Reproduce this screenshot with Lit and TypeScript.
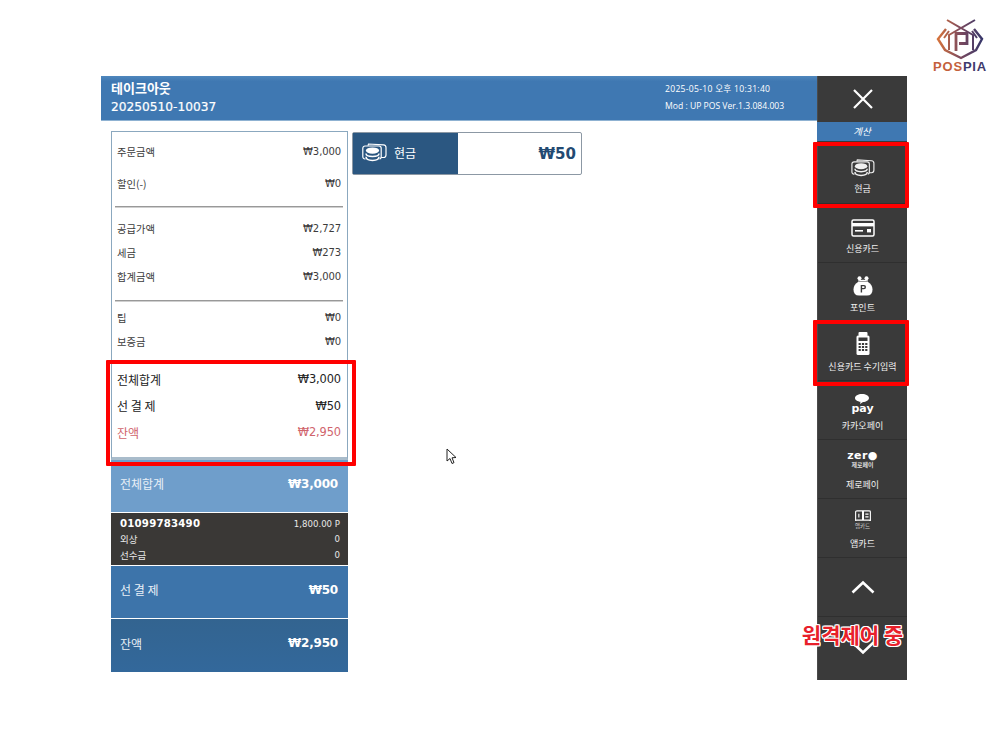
import { LitElement, html, css, svg } from "lit";
import { customElement } from "lit/decorators.js";

const cashIcon = (size: number, bg: string) => html`<svg width=${size} height=${Math.round(size * 0.76)} viewBox="0 0 25 19" fill="none" stroke="currentColor" stroke-width="1.2">
  <path d="M6 2.6 L6.5 1 L21.5 1.8 Q24 2 24 4.5 L24 12 Q24 14.5 21.5 14.5 L19 14.5"/>
  <rect x="0.8" y="3" width="18.4" height="13" rx="2.2"/>
  <path d="M3.5 6.5 H17.5 V19 H3.5 Z" fill=${bg} stroke="none"/>
  <ellipse cx="10.5" cy="7.6" rx="6.6" ry="3.2" fill="currentColor" stroke="none"/>
  <path d="M4 10.4 Q4 13.4 10.5 13.4 Q17 13.4 17 10.4" stroke-width="1.5"/>
  <path d="M4 13.8 Q4 17.4 10.5 17.4 Q17 17.4 17 13.8" stroke-width="1.5"/>
</svg>`;

const cardIcon = html`<svg width="24" height="18" viewBox="0 0 24 18" fill="none">
  <rect x="1" y="1" width="22" height="16" rx="1.5" stroke="#fff" stroke-width="1.5"/>
  <rect x="1" y="4" width="22" height="3.4" fill="#fff"/>
  <rect x="4" y="11" width="8" height="1.6" fill="#fff"/>
  <rect x="16" y="10" width="4" height="3.4" fill="#fff"/>
</svg>`;

const purseIcon = html`<svg width="20" height="20" viewBox="0 0 20 20">
  <circle cx="6.5" cy="2.2" r="2" fill="#fff"/><circle cx="13.5" cy="2.2" r="2" fill="#fff"/>
  <path d="M5 4.4 Q10 3 15 4.4 L15 5.4 L5 5.4 Z" fill="#fff"/>
  <path d="M5 6 L15 6 Q19.5 8.5 19.5 13.5 Q19.5 19.5 14 19.5 L6 19.5 Q0.5 19.5 0.5 13.5 Q0.5 8.5 5 6 Z" fill="#fff"/>
  <path d="M7.7 16.5 L7.7 9 L11 9 Q13 9 13 11 Q13 13.2 11 13.2 L9.1 13.2 L9.1 16.5 Z M9.1 10.2 L9.1 12 L10.8 12 Q11.6 12 11.6 11.1 Q11.6 10.2 10.8 10.2 Z" fill="#3a3a3a" fill-rule="evenodd"/>
</svg>`;

const terminalIcon = html`<svg width="14" height="23" viewBox="0 0 14 23">
  <rect x="2.5" y="0" width="9" height="4" rx="1" fill="#fff"/>
  <rect x="0.5" y="3.5" width="13" height="19.5" rx="1.5" fill="#fff"/>
  <rect x="2.5" y="5.5" width="9" height="3.5" fill="#3a3a3a"/>
  ${[11, 14, 17].map((y) => [2.6, 5.9, 9.2].map((x) => svg`<rect x=${x} y=${y} width="2.2" height="2" fill="#3a3a3a"/>`))}
</svg>`;

const appIcon = html`<svg width="18" height="12" viewBox="0 0 18 13" fill="none" stroke="#fff" stroke-width="1.2">
  <path d="M1 2 Q1 1 2.5 1 L8.5 1 L8.5 11 L2.5 11 Q1 11 1 12 Z"/>
  <path d="M9.5 1 L15.5 1 Q17 1 17 2 L17 12 Q17 11 15.5 11 L9.5 11 Z"/>
  <path d="M4.5 4 L4.5 8 M11.5 4.5 L15 4.5 M11.5 7.5 L15 7.5"/>
</svg>`;

const logo = html`<svg width="50" height="42" viewBox="0 0 50 42" fill="none">
  <defs><linearGradient id="lg" gradientUnits="userSpaceOnUse" x1="2" y1="20" x2="48" y2="20">
    <stop offset="0" stop-color="#d9743a"/><stop offset=".5" stop-color="#7d4a5e"/><stop offset="1" stop-color="#35366a"/>
  </linearGradient></defs>
  <g stroke="url(#lg)" stroke-width="2.4">
    <path d="M11 11 L3 21 L10 32 L26 40 L41 32 L47 21 L39 11"/>
    <path d="M9 20 L14 13 M42 20 L37 13" stroke-width="2"/>
    <path d="M12 2 L26 10 L40 2 M26 10 L14 17 L14 32 M26 10 L38 17 L38 32" stroke-width="2"/>
    <path d="M21 33 L21 15.5 L32 15.5 L32 25.5 L24 25.5" stroke-width="2.8"/>
  </g>
</svg>`;

type Row = [string, string, string?];

@customElement("app-root")
export class AppRoot extends LitElement {
  static styles = css`
    :host {
      display: block;
      position: relative;
      width: 1008px;
      height: 756px;
      background: #fff;
      overflow: hidden;
      font-family: "Noto Sans CJK KR", "Noto Sans", sans-serif;
      color: #333;
    }
    .logo {
      position: absolute;
      left: 935px;
      top: 18px;
      width: 50px;
      display: flex;
      flex-direction: column;
      align-items: center;
    }
    .logo-text {
      font: 700 13px/14px "Liberation Sans", sans-serif;
      letter-spacing: 0.8px;
      margin-top: 0;
      white-space: nowrap;
      color: #c4603c;
    }
    .logo-text b { color: #3f3a6c; font-weight: 700; }
    .shell {
      display: flex;
      padding: 76px 0 0 101px;
    }
    .main { width: 716px; }
    .head {
      height: 45px;
      background: linear-gradient(#4f87bd, #3f78b2 12%, #3f78b2);
      border-bottom: 1px solid #8fb2d2;
      box-sizing: border-box;
      display: flex;
      justify-content: space-between;
      padding: 3px 33px 0 10px;
      color: #fff;
    }
    .head-l { font-size: 13px; line-height: 18px; font-weight: 700; }
    .head-l .no { font-family: "DejaVu Sans", sans-serif; font-size: 12.2px; font-weight: 400; -webkit-text-stroke: .2px #fff; margin-top: 1px; }
    .head-r { font: 8.6px/17px "Open Sans", "Noto Sans CJK KR", sans-serif; padding-top: 2px; width: 119px; white-space: nowrap; }
    .head-r .date { letter-spacing: .28px; }
    .body { display: flex; padding: 10px 0 0 10px; }
    .left { width: 237px; }
    .box {
      box-sizing: border-box;
      height: 329px;
      border: 1px solid #8ba8bf;
      border-bottom: 3px solid #a9bccb;
      padding: 4px 4px 0 3px;
    }
    .row {
      display: flex;
      justify-content: space-between;
      align-items: center;
      padding: 0 2px 0 2px;
      font-size: 10.3px;
      color: #3c3c3c;
    }
    .row .v { font: 10px "DejaVu Sans", sans-serif; letter-spacing: -0.1px; }
    .r-tall { height: 31.5px; }
    .r-mid { height: 24.4px; }
    .r-big { height: 26.6px; font-size: 12px; color: #222; }
    .r-big .v { font-size: 11.4px; }
    .r-big.red, .r-big.red .v { color: #d0646c; }
    .rule { height: 1px; background: #999; border-bottom: 1px solid #cfcfcf; }
    .rule.a { margin-top: 7px; margin-bottom: 8px; }
    .rule.b { margin-top: 11px; margin-bottom: 3px; }
    .gap { height: 12px; }
    .panel {
      height: 51px;
      margin-bottom: 1px;
      box-sizing: border-box;
      display: flex;
      align-items: center;
      justify-content: space-between;
      padding: 0 10px 5px 9px;
      color: #e9f0f7;
      font-size: 12px;
    }
    .panel .v { font: 700 12px "DejaVu Sans", sans-serif; letter-spacing: -0.2px; color: #fff; }
    .p1 { background: #6f9ecb; height: 52px; }
    .p3 { background: #3d74aa; height: 52px; }
    .p4 { background: linear-gradient(#336490, #33689b); margin-top: 1px; height: 53px; margin-bottom: 0; }
    .member {
      height: 52px;
      margin-bottom: 1px;
      box-sizing: border-box;
      background: #3a3836;
      color: #e8e8e8;
      padding: 3px 8px 0 9px;
      font-size: 9.5px;
    }
    .m-row { display: flex; justify-content: space-between; align-items: center; height: 15.5px; }
    .m-row .id { font: 700 10.2px "DejaVu Sans", sans-serif; color: #fff; letter-spacing: .2px; }
    .m-row .v { font: 8.6px "DejaVu Sans", sans-serif; }
    .card {
      margin: 1px 0 0 4px;
      width: 230px;
      height: 43px;
      box-sizing: border-box;
      border: 1px solid #8c98a4;
      border-radius: 2px;
      display: flex;
    }
    .card-l {
      width: 105px;
      background: #2b5781;
      color: #fff;
      display: flex;
      align-items: center;
      gap: 7px;
      padding: 0 0 2px 9px;
      box-sizing: border-box;
      font-size: 12px;
    }
    .card-r {
      flex: 1;
      display: flex;
      align-items: center;
      justify-content: flex-end;
      padding-right: 5px;
      font: 700 15px "DejaVu Sans", sans-serif;
      color: #234a72;
    }
    .side { width: 90px; height: 604px; background: #3a3a3a; display: flex; flex-direction: column; border-left: 1px solid #4a4a4a; box-sizing: border-box; }
    .close { height: 46px; display: flex; align-items: center; justify-content: center; }
    .calc {
      height: 19px;
      margin-left: -1px;
      background: #3f78b2;
      color: #fff;
      font-size: 9.5px;
      font-style: italic;
      text-align: center;
      line-height: 19px;
    }
    .item {
      height: 59px;
      box-sizing: border-box;
      border-bottom: 1px solid #2f2f2f;
      display: flex;
      flex-direction: column;
      align-items: center;
      color: #f0f0f0;
      font-size: 9px;
      white-space: nowrap;
    }
    .item.first { height: 63px; }
    .ic { height: 33px; display: flex; flex-direction: column; justify-content: flex-end; align-items: center; flex: none; }
    .first .ic { height: 36px; }
    .zero-ic { height: 29px; margin-bottom: 4px; }
    .app-ic { height: 31px; margin-bottom: 2px; }
    .lab { line-height: 13px; margin-top: 5px; }
    .pay { font: 700 11px/10px "DejaVu Sans", sans-serif; color: #fff; }
    .zero { font: 700 11px/10px "DejaVu Sans", sans-serif; color: #fff; letter-spacing: .4px; }
    .tiny { font-size: 6px; line-height: 8px; font-weight: 700; color: #ddd; }
    .tiny2 { font-size: 5.5px; line-height: 8px; color: #ccc; }
    .arrow { height: 59px; display: flex; align-items: center; justify-content: center; border-bottom: 1px solid #2f2f2f; box-sizing: border-box; }
    .arrow.last { height: 63px; border: 0; padding-bottom: 1px; }
    .redbox { position: absolute; border: 4px solid #f00; box-sizing: border-box; border-radius: 1px; }
    .rb1 { left: 813px; top: 142px; width: 96px; height: 66px; }
    .rb2 { left: 813px; top: 320px; width: 96px; height: 66px; }
    .rb3 { left: 106px; top: 360px; width: 250px; height: 106px; }
    .remote {
      position: absolute;
      left: 790px;
      top: 619px;
      width: 125px;
      text-align: center;
      font-size: 21px;
      line-height: 30px;
      font-weight: 700;
      color: #e8202a;
      white-space: nowrap;
      text-shadow: 1px 0 0 #fff, -1px 0 0 #fff, 0 1px 0 #fff, 0 -1px 0 #fff, 1px 1px 0 #fff, -1px -1px 0 #fff, 1px -1px 0 #fff, -1px 1px 0 #fff;
    }
    .cursor { position: absolute; left: 446px; top: 448px; }
  `;

  private rows(list: Row[], cls: string) {
    return list.map(
      ([k, v, extra]) => html`<div class="row ${cls} ${extra ?? ""}"><span>${k}</span><span class="v">${v}</span></div>`
    );
  }

  render() {
    return html`
      <div class="logo">${logo}<div class="logo-text">POS<b>PIA</b></div></div>
      <div class="shell">
        <div class="main">
          <div class="head">
            <div class="head-l"><div>테이크아웃</div><div class="no">20250510-10037</div></div>
            <div class="head-r"><div class="date">2025-05-10 오후 10:31:40</div><div>Mod : UP POS Ver.1.3.084.003</div></div>
          </div>
          <div class="body">
            <div class="left">
              <div class="box">
                ${this.rows([["주문금액", "₩3,000"], ["할인(-)", "₩0"]], "r-tall")}
                <div class="rule a"></div>
                ${this.rows([["공급가액", "₩2,727"], ["세금", "₩273"], ["합계금액", "₩3,000"]], "r-mid")}
                <div class="rule b"></div>
                ${this.rows([["팁", "₩0"], ["보증금", "₩0"]], "r-mid")}
                <div class="gap"></div>
                ${this.rows([["전체합계", "₩3,000"], ["선 결 제", "₩50"], ["잔액", "₩2,950", "red"]], "r-big")}
              </div>
              <div class="panel p1"><span>전체합계</span><span class="v">₩3,000</span></div>
              <div class="member">
                <div class="m-row"><span class="id">01099783490</span><span class="v">1,800.00 P</span></div>
                <div class="m-row"><span>외상</span><span class="v">0</span></div>
                <div class="m-row"><span>선수금</span><span class="v">0</span></div>
              </div>
              <div class="panel p3"><span>선 결 제</span><span class="v">₩50</span></div>
              <div class="panel p4"><span>잔액</span><span class="v">₩2,950</span></div>
            </div>
            <div class="card">
              <div class="card-l">${cashIcon(25, "#2b5781")}<span>현금</span></div>
              <div class="card-r">₩50</div>
            </div>
          </div>
        </div>
        <div class="side">
          <div class="close"><svg width="22" height="22" viewBox="0 0 22 22" stroke="#fff" stroke-width="2.2"><path d="M2 2 L20 20 M20 2 L2 20"/></svg></div>
          <div class="calc">계산</div>
          <div class="item first"><div class="ic">${cashIcon(24, "#3a3a3a")}</div><div class="lab">현금</div></div>
          <div class="item"><div class="ic">${cardIcon}</div><div class="lab">신용카드</div></div>
          <div class="item"><div class="ic">${purseIcon}</div><div class="lab">포인트</div></div>
          <div class="item"><div class="ic">${terminalIcon}</div><div class="lab">신용카드 수기입력</div></div>
          <div class="item"><div class="ic"><svg width="14" height="10" viewBox="0 0 14 10"><path d="M7 0 C11 0 14 1.8 14 4 C14 6.2 11 8 8 8 L5 10 L5.5 7.8 C2.5 7.5 0 6 0 4 C0 1.8 3 0 7 0 Z" fill="#fff"/></svg><div class="pay">pay</div></div><div class="lab">카카오페이</div></div>
          <div class="item"><div class="ic zero-ic"><div class="zero">zer●</div><div class="tiny">제로페이</div></div><div class="lab">제로페이</div></div>
          <div class="item"><div class="ic app-ic">${appIcon}<div class="tiny2">앱카드</div></div><div class="lab">앱카드</div></div>
          <div class="arrow"><svg width="24" height="14" viewBox="0 0 24 14" fill="none" stroke="#fff" stroke-width="2.6"><path d="M1.5 12.5 L12 2.5 L22.5 12.5"/></svg></div>
          <div class="arrow last"><svg width="24" height="14" viewBox="0 0 24 14" fill="none" stroke="#fff" stroke-width="2.6"><path d="M1.5 1.5 L12 11.5 L22.5 1.5"/></svg></div>
        </div>
      </div>
      <div class="redbox rb1"></div>
      <div class="redbox rb2"></div>
      <div class="redbox rb3"></div>
      <div class="remote">원격제어 중</div>
      <svg class="cursor" width="12" height="17" viewBox="0 0 12 17"><path d="M1 1 L1 13 L4 10.5 L6 15.5 L8 14.6 L6 9.8 L10 9.5 Z" fill="#fff" stroke="#222" stroke-width="1"/></svg>
    `;
  }
}
